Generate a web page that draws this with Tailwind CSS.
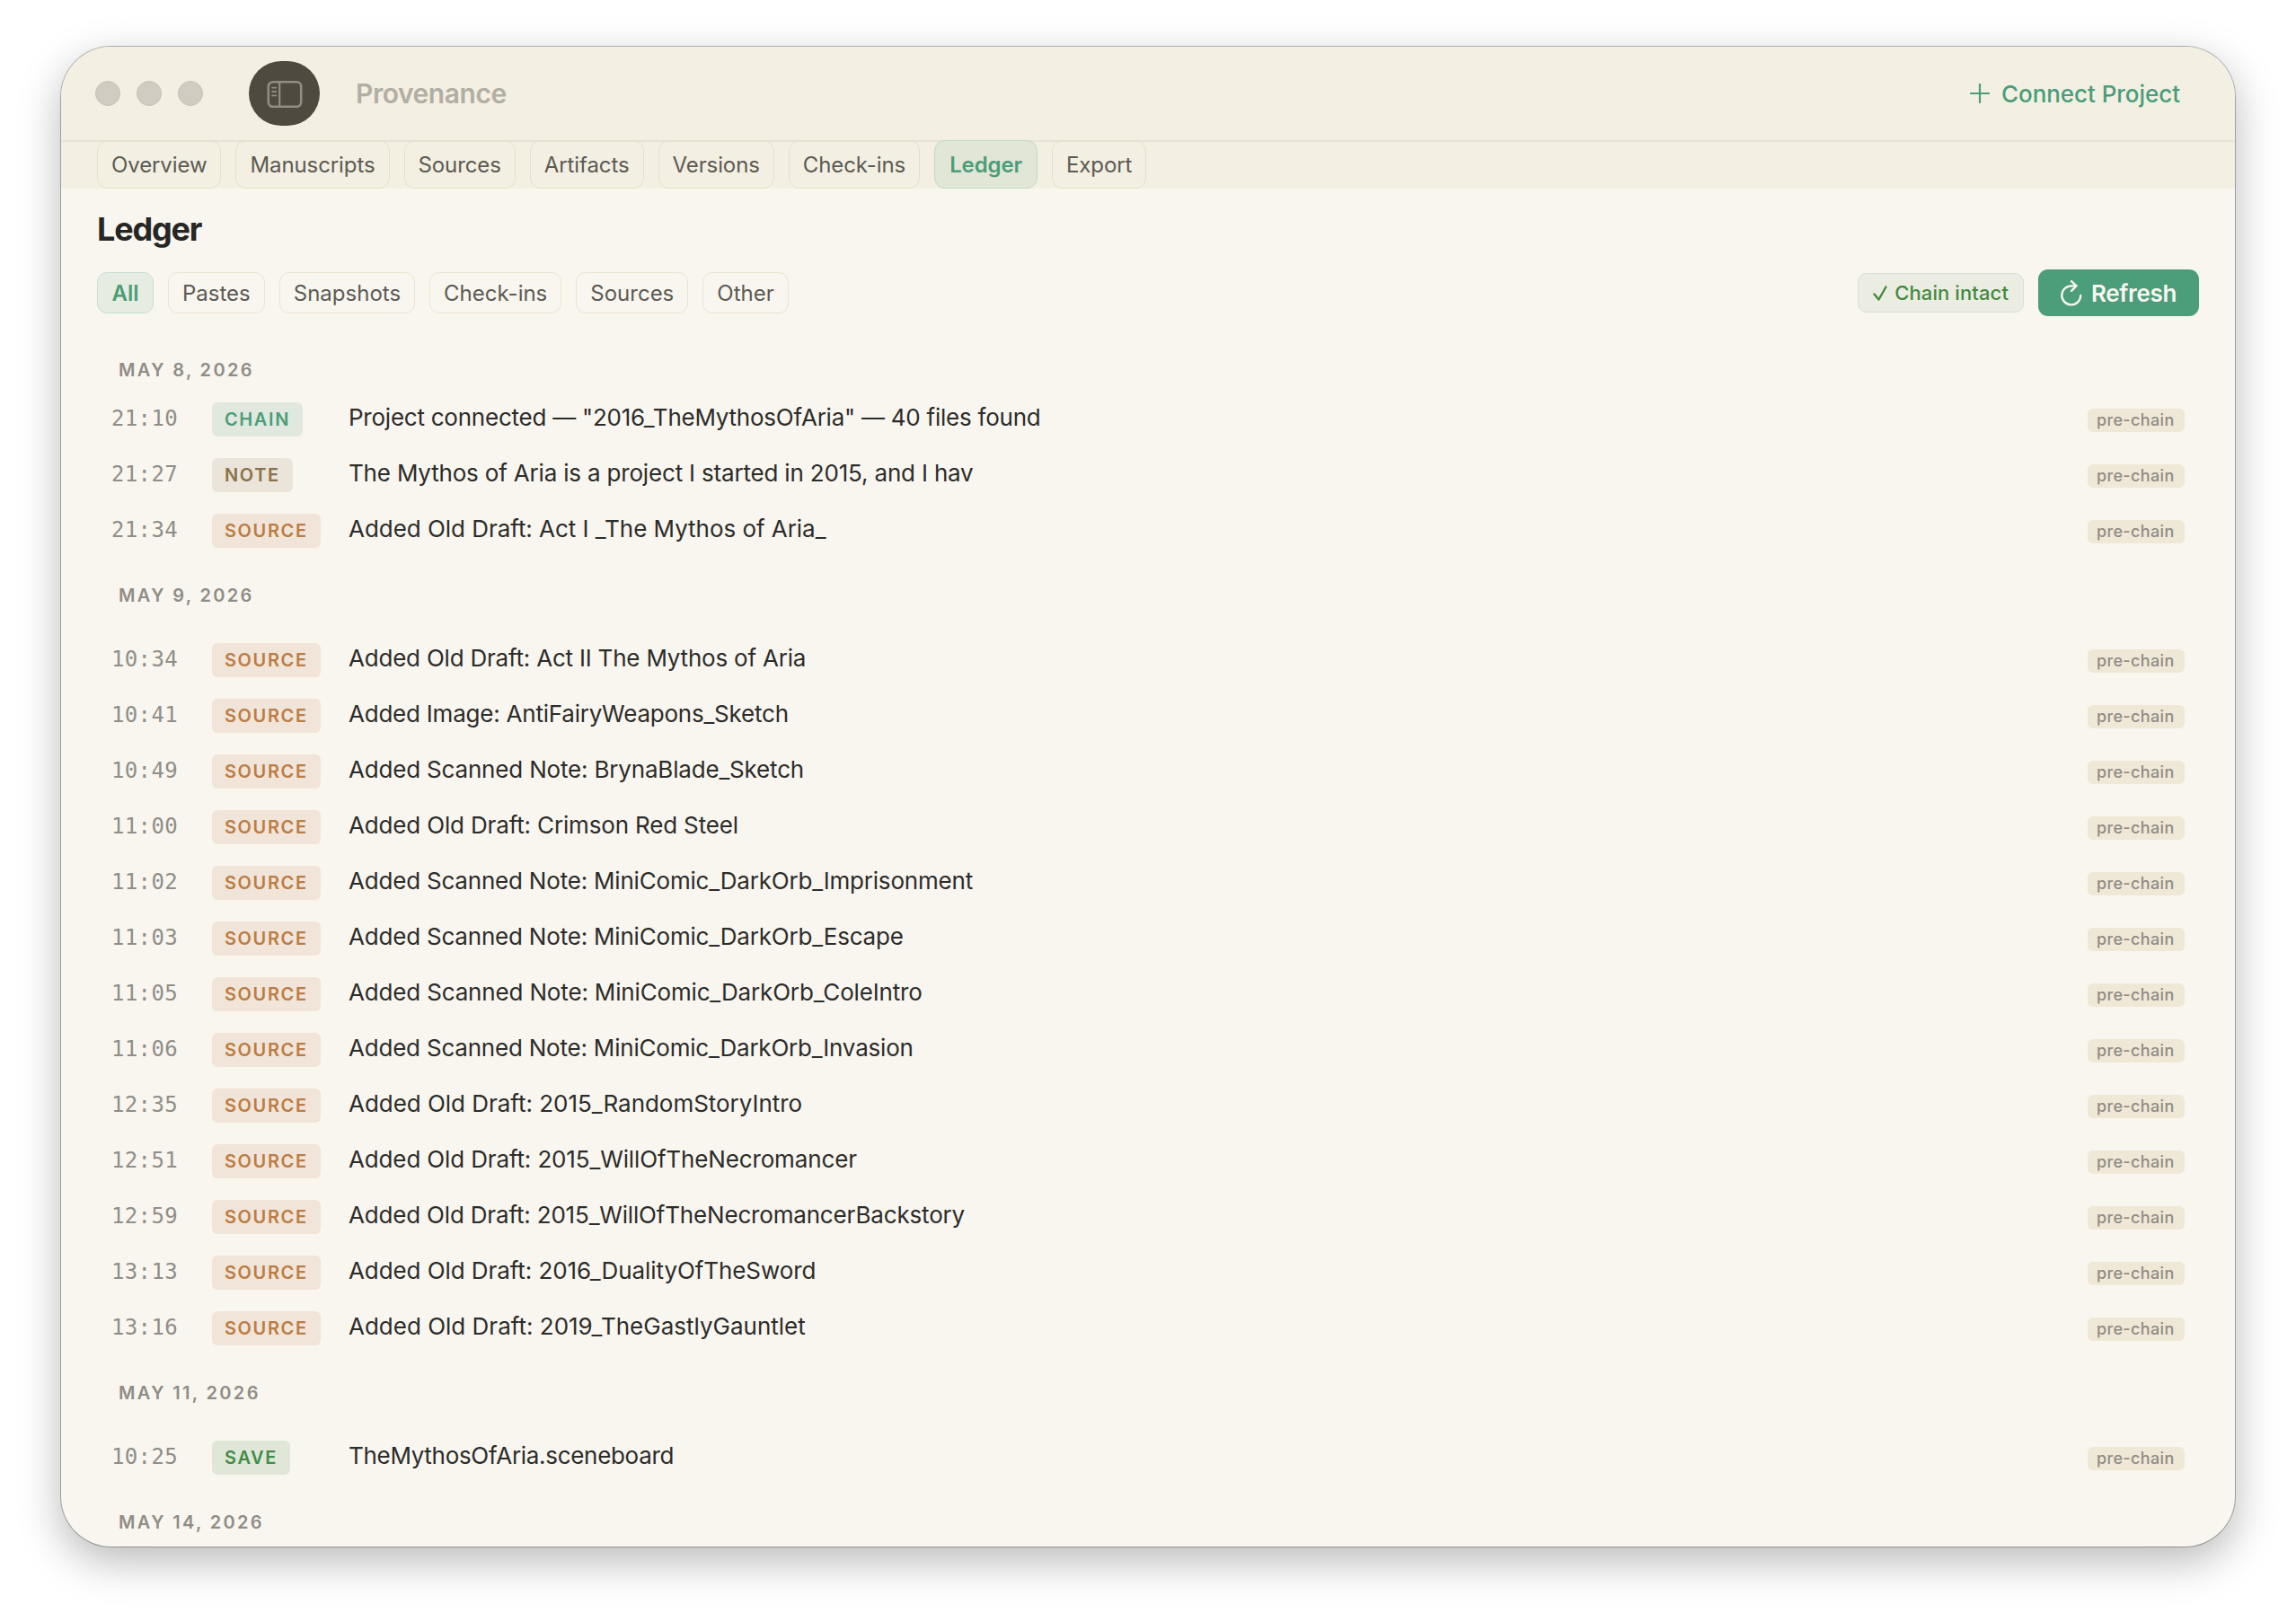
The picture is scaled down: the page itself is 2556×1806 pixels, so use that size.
<!DOCTYPE html>
<html lang="en">
<head>
    <meta charset="UTF-8" />
    <meta name="viewport" content="width=device-width, initial-scale=1.0" />
    <title>Provenance</title>
    <script src="https://cdn.jsdelivr.net/npm/@tailwindcss/browser@4"></script>
</head>
<body class="bg-white font-['Inter',sans-serif] w-[2556px] h-[1806px] overflow-hidden pt-[52px] pl-[68px]">
    <div id="window" class="w-[2420px] h-[1670px] rounded-[56px] overflow-hidden bg-[#f9f6ef] flex flex-col shadow-[0_0_0_1px_rgba(0,0,0,0.28),0_16px_48px_rgba(0,0,0,0.28)]">

        <!-- Title bar -->
        <header class="h-[104px] shrink-0 bg-[#f3efe3] flex items-center pl-[38px] pr-[61px]">
            <div class="flex gap-[18px]">
                <span class="size-7 rounded-full bg-[#d0ccc1] border border-[#c6c2b7]"></span>
                <span class="size-7 rounded-full bg-[#d0ccc1] border border-[#c6c2b7]"></span>
                <span class="size-7 rounded-full bg-[#d0ccc1] border border-[#c6c2b7]"></span>
            </div>
            <button class="ml-[51px] w-[79px] h-[72px] rounded-[36px] bg-[#4e4a40] flex items-center justify-center">
                <svg class="w-[40px] h-[32px] mt-[2px]" viewBox="0 0 40 32" fill="none" stroke="#918d85">
                    <rect x="1.8" y="2.2" width="36.4" height="27.6" rx="5" stroke-width="2.6" />
                    <path d="M14.2 2v28" stroke-width="2.2" />
                    <path d="M6.2 8.6h4M6.2 13h4M6.2 17.4h4" stroke-width="1.9" stroke-linecap="round" />
                </svg>
            </button>
            <h1 class="ml-[40px] text-[30px] font-semibold tracking-[-0.45px] text-[#b2aea4]">Provenance</h1>
            <button class="ml-auto flex items-center gap-[13px] text-[26px] font-medium tracking-[-0.05px] text-[#4a9d79]">
                <svg class="size-[22px]" viewBox="0 0 22 22" fill="none" stroke="currentColor" stroke-width="2.2" stroke-linecap="round">
                    <path d="M11 1v20M1 11h20" />
                </svg>
                Connect Project
            </button>
        </header>

        <!-- Section tabs -->
        <nav id="tabs" class="h-[54px] shrink-0 bg-[#f3efe2] flex gap-4 pl-10 text-2xl tracking-[-0.1px] text-[#5c5a54] shadow-[inset_0_2px_0_#e6e2d7]"></nav>

        <main class="flex-1 flex flex-col px-10 overflow-hidden">
            <h2 class="mt-[23px] leading-[44px] text-[36px] font-bold tracking-[-1.2px] text-[#262624]">Ledger</h2>

            <div class="mt-[23px] h-[52px] flex items-center justify-between">
                <div id="filters" class="flex gap-4 text-2xl text-[#5c5a54]"></div>
                <div class="flex items-center gap-4">
                    <span class="h-[44px] rounded-[10px] border border-[#d5dfd0] bg-[#ebede2] px-[16px] flex items-center gap-[8px] text-[22px] font-medium tracking-[0.1px] text-[#43893f]">
                        <svg class="w-[16px] h-[17px]" viewBox="0 0 16 17" fill="none" stroke="currentColor" stroke-width="2.4" stroke-linecap="round" stroke-linejoin="round">
                            <path d="M1.5 9.5l5 6L14.5 1.5" />
                        </svg>
                        Chain intact
                    </span>
                    <button class="h-[52px] rounded-[11px] bg-[#4c9d79] px-[25px] flex items-center gap-[10px] text-[26px] font-semibold tracking-[-0.35px] text-[#faf7f0]">
                        <svg class="w-[24px] h-[29px]" viewBox="0 0 24 29" fill="none" stroke="currentColor" stroke-width="2.3" stroke-linecap="round" stroke-linejoin="round">
                            <path d="M22.3 17A10.5 10.5 0 1 1 12 6.3h5.5" />
                            <path d="M12 1.2l5.6 5.1-5.6 5.6" />
                        </svg>
                        Refresh
                    </button>
                </div>
            </div>

            <div id="entries" class="mt-[34px]"></div>
        </main>
    </div>

    <script>
        const tabs = ["Overview", "Manuscripts", "Sources", "Artifacts", "Versions", "Check-ins", "Ledger", "Export"];
        const filters = ["All", "Pastes", "Snapshots", "Check-ins", "Sources", "Other"];

        // Badge colours by entry type.
        const badges = {
            CHAIN: "bg-[#e1e9de] text-[#4a9d79]",
            NOTE: "bg-[#eae4da] text-[#8a7248]",
            SOURCE: "bg-[#f1e5d9] text-[#bb7d45]",
            SAVE: "bg-[#e0e7d9] text-[#438c47]",
        };

        // Entries are [time, type, text, letter spacing in px].
        const days = [
            { date: "MAY 8, 2026", entries: [
                ["21:10", "CHAIN", "Project connected — \"2016_TheMythosOfAria\" — 40 files found", -0.24],
                ["21:27", "NOTE", "The Mythos of Aria is a project I started in 2015, and I hav", -0.18],
                ["21:34", "SOURCE", "Added Old Draft: Act I _The Mythos of Aria_", -0.04],
            ] },
            { date: "MAY 9, 2026", entries: [
                ["10:34", "SOURCE", "Added Old Draft: Act II The Mythos of Aria", -0.21],
                ["10:41", "SOURCE", "Added Image: AntiFairyWeapons_Sketch", -0.22],
                ["10:49", "SOURCE", "Added Scanned Note: BrynaBlade_Sketch", -0.18],
                ["11:00", "SOURCE", "Added Old Draft: Crimson Red Steel", -0.16],
                ["11:02", "SOURCE", "Added Scanned Note: MiniComic_DarkOrb_Imprisonment", -0.2],
                ["11:03", "SOURCE", "Added Scanned Note: MiniComic_DarkOrb_Escape", -0.2],
                ["11:05", "SOURCE", "Added Scanned Note: MiniComic_DarkOrb_ColeIntro", -0.16],
                ["11:06", "SOURCE", "Added Scanned Note: MiniComic_DarkOrb_Invasion", -0.21],
                ["12:35", "SOURCE", "Added Old Draft: 2015_RandomStoryIntro", -0.03],
                ["12:51", "SOURCE", "Added Old Draft: 2015_WillOfTheNecromancer", -0.14],
                ["12:59", "SOURCE", "Added Old Draft: 2015_WillOfTheNecromancerBackstory", -0.18],
                ["13:13", "SOURCE", "Added Old Draft: 2016_DualityOfTheSword", -0.08],
                ["13:16", "SOURCE", "Added Old Draft: 2019_TheGastlyGauntlet", 0],
            ] },
            { date: "MAY 11, 2026", entries: [
                ["10:25", "SAVE", "TheMythosOfAria.sceneboard", -0.31],
            ] },
            { date: "MAY 14, 2026", entries: [] },
        ];

        document.getElementById("tabs").innerHTML = tabs.map(name => name === "Ledger"
            ? `<a class="rounded-[12px] border border-[#c3dac8] bg-[#e1e6d7] px-[16px] pt-[2px] flex items-center font-semibold text-[#4a9d79]">${name}</a>`
            : `<a class="rounded-[12px] border border-[#e6dfc9] px-[15px] pt-[2px] flex items-center">${name}</a>`
        ).join("");

        document.getElementById("filters").innerHTML = filters.map(name => name === "All"
            ? `<a class="h-[46px] rounded-[11px] border border-[#c6dfd0] bg-[#e7ece2] px-[15.5px] pt-[2px] flex items-center font-semibold text-[#4a9d79]">${name}</a>`
            : `<a class="h-[46px] rounded-[11px] border border-[#ebe4d0] px-[15px] pt-[2px] flex items-center">${name}</a>`
        ).join("");

        document.getElementById("entries").innerHTML = days.map((day, i) => `
            <h3 class="${i === 0 ? "h-[50px]" : "h-[82px] pt-[15px]"} pl-6 leading-[52px] text-[20px] font-semibold tracking-[2.35px] text-[#8f8d86]">${day.date}</h3>
            ${day.entries.map(([time, type, text, spacing]) => `
            <div class="h-[62px] px-4 pt-[9px] flex items-baseline">
                <span class="w-[112px] font-['DejaVu_Sans_Mono',monospace] text-2xl tracking-[0.35px] text-[#908e87]">${time}</span>
                <span class="w-[152px]"><span class="inline-block h-[38px] leading-[38px] rounded-[6px] px-[14px] text-[20px] font-semibold tracking-[1.6px] ${badges[type]}">${type}</span></span>
                <span class="text-[26px] text-[#2c2c2a]" style="letter-spacing: ${spacing}px">${text}</span>
                <span class="ml-auto w-[108px] h-[26px] leading-[26px] rounded-[6px] bg-[#efe8d7] pl-[10px] text-[18px] font-medium tracking-[0.35px] text-[#8f8c84]">pre-chain</span>
            </div>`).join("")}`
        ).join("");
    </script>
</body>
</html>
